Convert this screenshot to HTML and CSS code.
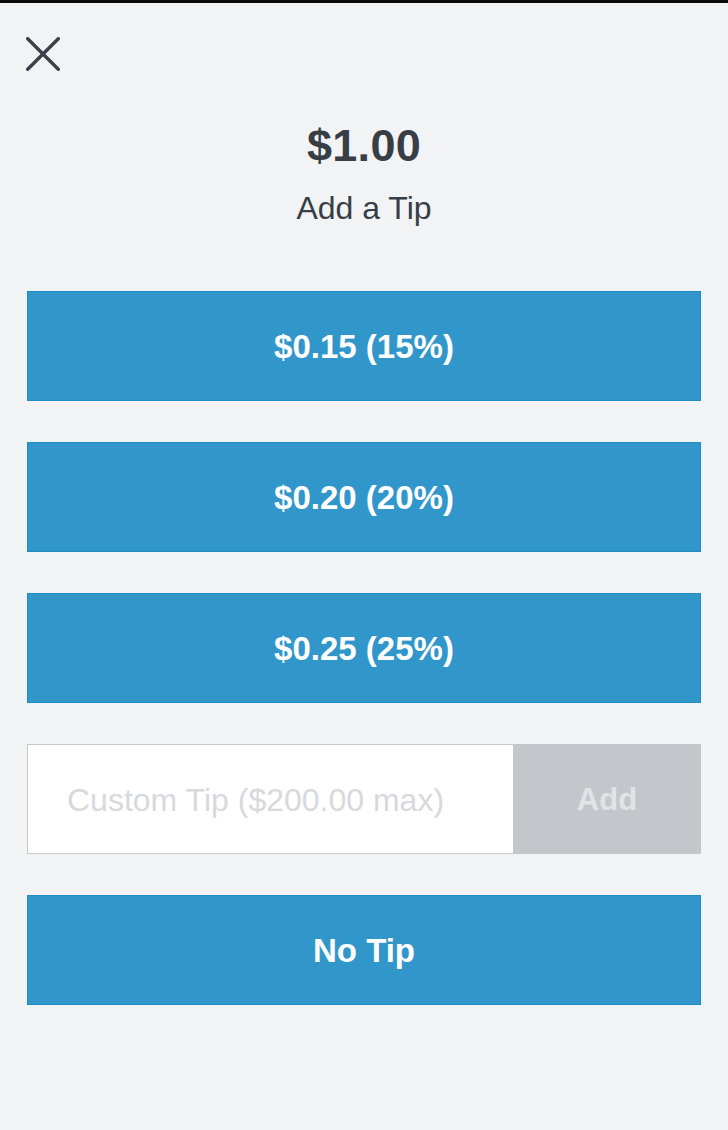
FILE: index.html
```html
<!DOCTYPE html>
<html lang="en">
<head>
<meta charset="utf-8">
<title>Add a Tip</title>
<link rel="stylesheet" href="styles.css">
</head>
<body>
<div class="topbar"></div>
<main class="screen">
  <div class="close-row">
    <button class="close" aria-label="Close">
      <svg width="34" height="34" viewBox="0 0 34 34"><path d="M1.7 1.7 L32.3 32.3 M32.3 1.7 L1.7 32.3" stroke="#3a4149" stroke-width="3.4" stroke-linecap="round" fill="none"/></svg>
    </button>
  </div>
  <h1 class="amount">$1.00</h1>
  <p class="subtitle">Add a Tip</p>
  <div class="options">
    <button class="tip">$0.15 (15%)</button>
    <button class="tip">$0.20 (20%)</button>
    <button class="tip">$0.25 (25%)</button>
    <div class="custom">
      <input class="custom-input" type="text" placeholder="Custom Tip ($200.00 max)">
      <button class="add">Add</button>
    </div>
    <button class="tip">No Tip</button>
  </div>
</main>
</body>
</html>
```

FILE: styles.css
```css
* { box-sizing: border-box; }
html, body {
  margin: 0;
  padding: 0;
  background: #f2f3f5;
  font-family: "Liberation Sans", Arial, sans-serif;
  color: #373e46;
}
body { height: 1130px; overflow: hidden; }
.topbar {
  height: 3px;
  background: #0a0a0a;
}
.screen {
  padding: 0 27px;
}
.close-row {
  padding-top: 34px;
}
.close {
  display: block;
  padding: 0;
  border: 0;
  background: none;
  width: 34px;
  height: 34px;
  margin-left: -1px;
}
.close svg { display: block; }
.amount {
  margin: 50px 0 0;
  font-size: 45px;
  line-height: 50px;
  font-weight: 700;
  text-align: center;
  letter-spacing: 0.3px;
}
.subtitle {
  margin: 19px 0 0;
  font-size: 32px;
  line-height: 36px;
  text-align: center;
}
.options {
  margin-top: 65px;
  display: flex;
  flex-direction: column;
  gap: 41px;
}
.tip {
  height: 110px;
  width: 100%;
  border: 1px solid #1d8bc5;
  background: #3197cb;
  color: #ffffff;
  font-family: "Liberation Sans", Arial, sans-serif;
  font-size: 33px;
  font-weight: 700;
  display: flex;
  align-items: center;
  justify-content: center;
  padding: 2px 0 0;
}
.custom {
  display: flex;
  height: 110px;
}
.custom-input {
  flex: 1;
  min-width: 0;
  height: 100%;
  border: 1px solid #c5c9cd;
  border-right: 0;
  background: #ffffff;
  padding: 2px 0 0 39px;
  font-family: "Liberation Sans", Arial, sans-serif;
  font-size: 32px;
  color: #373e46;
  outline: none;
}
.custom-input::placeholder {
  color: #d6d9dd;
}
.add {
  width: 188px;
  height: 100%;
  border: 0;
  background: #c3c7cb;
  color: #e1e4e7;
  font-family: "Liberation Sans", Arial, sans-serif;
  font-size: 31px;
  font-weight: 700;
  padding: 2px 0 0;
}
```
